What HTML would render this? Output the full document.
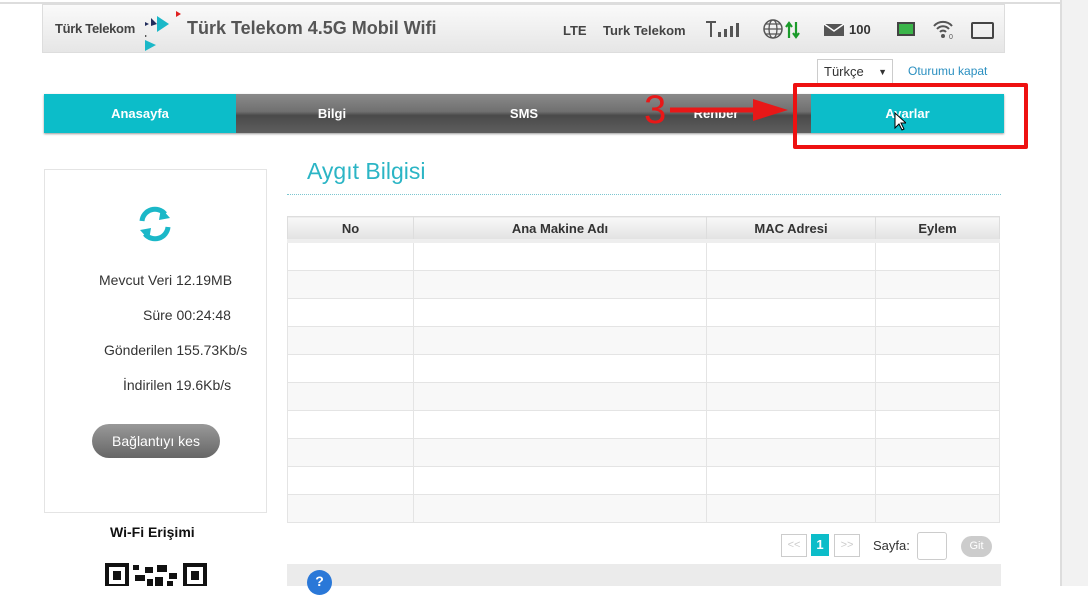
<!DOCTYPE html>
<html><head><meta charset="utf-8"><style>
body{margin:0;width:1088px;height:586px;background:#fff;font-family:"Liberation Sans",sans-serif;position:relative;overflow:hidden;color:#333}
.a{position:absolute}
.hdr{left:42px;top:4px;width:963px;height:49px;background:linear-gradient(#fafafa,#e6e6e6);border:1px solid #ddd;box-sizing:border-box}
.nav{left:44px;top:94px;width:960px;height:39px;background:linear-gradient(#8a8a8a,#707070 45%,#4a4a4a 55%,#5e5e5e);box-shadow:0 1px 2px #999}
.nav div{position:absolute;top:0;height:39px;line-height:39px;text-align:center;color:#fff;font-weight:bold;font-size:13px}
.tbl{left:287px;top:216px;width:713px;border-collapse:collapse}
.tbl th{height:22px;background:linear-gradient(#f8f8f8,#e2e2e2);font-size:13px;color:#333;border:1px solid #ddd;border-bottom:4px solid #eee;padding:0}
.tbl td{height:27px;border:1px solid #e4e4e4;padding:0}
.tbl tr:nth-child(odd) td{background:#f8f8f8}
.st{font-size:14px;color:#333;position:absolute}
</style></head><body>
<div class="a" style="left:0;top:2px;width:1060px;height:2px;background:#ddd"></div>
<div class="a" style="left:1060px;top:0;width:2px;height:586px;background:#ddd"></div>
<div class="a" style="left:1062px;top:0;width:26px;height:586px;background:#f2f2f2"></div>
<div class="a hdr"></div>
<div class="a" style="left:55px;top:21px;font-size:13px;font-weight:bold;color:#444;letter-spacing:-0.3px">Türk Telekom</div>
<svg class="a" style="left:145px;top:8px" width="40" height="44"><polygon points="12,8 24,16 12,24" fill="#1bb8c8"/><polygon points="6,10 12,16 6,18" fill="#222d5c"/><polygon points="31,3 36,6 31,9" fill="#e02020"/><polygon points="0,14 4,16 0,18" fill="#222d5c"/><polygon points="0,32 11,37 0,43" fill="#1bb8c8"/><polygon points="-2,26 2,28 -2,30" fill="#222"/></svg>
<div class="a" style="left:187px;top:18px;font-size:18px;font-weight:bold;color:#555">Türk Telekom 4.5G Mobil Wifi</div>
<div class="a" style="left:563px;top:23px;font-size:13px;font-weight:bold;color:#444">LTE</div>
<div class="a" style="left:603px;top:23px;font-size:13px;font-weight:bold;color:#444">Turk Telekom</div>
<svg class="a" style="left:705px;top:20px" width="42" height="18"><path d="M1 2h10M6 2v15" stroke="#555" stroke-width="2"/><rect x="13" y="12" width="3" height="5" fill="#555"/><rect x="19" y="9" width="3" height="8" fill="#555"/><rect x="25" y="6" width="3" height="11" fill="#555"/><rect x="31" y="3" width="3" height="14" fill="#555"/></svg>
<svg class="a" style="left:763px;top:18px" width="42" height="22"><circle cx="10" cy="11" r="9" fill="none" stroke="#555" stroke-width="1.5"/><ellipse cx="10" cy="11" rx="4" ry="9" fill="none" stroke="#555" stroke-width="1.3"/><path d="M1 11h18M3 6h14M3 16h14" stroke="#555" stroke-width="1.3"/><path d="M26 20V6M23 9l3-4 3 4M33 4v14M30 15l3 4 3-4" stroke="#1a9a2a" stroke-width="2.2" fill="none"/></svg>
<svg class="a" style="left:823px;top:23px" width="22" height="14"><rect x="1" y="1" width="20" height="12" fill="#555"/><path d="M1 1l10 7 10-7" stroke="#fff" stroke-width="1.5" fill="none"/></svg>
<div class="a" style="left:849px;top:22px;font-size:13px;font-weight:bold;color:#333">100</div>
<div class="a" style="left:897px;top:22px;width:18px;height:14px;background:#444;padding:0"><div style="margin:2px;width:14px;height:10px;background:#3bb54a"></div></div>
<svg class="a" style="left:932px;top:18px" width="24" height="22"><path d="M2 8a12 12 0 0 1 18 0M5 11a8 8 0 0 1 12 0M8 14a4 4 0 0 1 6 0" stroke="#555" stroke-width="2" fill="none"/><circle cx="11" cy="18" r="2" fill="#555"/><text x="17" y="21" font-size="7" fill="#555" font-family="Liberation Sans">0</text></svg>
<div class="a" style="left:971px;top:22px;width:19px;height:13px;border:2px solid #444;border-radius:2px"></div>
<div class="a" style="left:817px;top:59px;width:76px;height:26px;border:1px solid #ccc;box-sizing:border-box;font-size:13px;line-height:24px;padding-left:6px;color:#333">Türkçe<span style="position:absolute;right:5px;font-size:9px">▼</span></div>
<div class="a" style="left:908px;top:64px;font-size:12px;color:#2a8fc0">Oturumu kapat</div>
<div class="a nav">
<div style="left:0;width:192px;background:#0cbdc9">Anasayfa</div>
<div style="left:192px;width:192px">Bilgi</div>
<div style="left:384px;width:192px">SMS</div>
<div style="left:576px;width:192px">Rehber</div>
<div style="left:767px;width:193px;background:#0cbdc9">Ayarlar</div>
</div>
<div class="a" style="left:644px;top:88px;font-size:40px;color:#e81818">3</div>
<svg class="a" style="left:668px;top:97px" width="124" height="26"><path d="M2 13h90" stroke="#e81818" stroke-width="5"/><polygon points="85,2 120,13 85,24" fill="#e81818"/></svg>
<div class="a" style="left:793px;top:83px;width:227px;height:58px;border:4px solid #ee1111;border-radius:2px"></div>
<svg class="a" style="left:894px;top:112px" width="12" height="20"><path d="M1 1v15l4-4 3 6 2-1-3-6h5z" fill="#fff" stroke="#000"/></svg>
<div class="a" style="left:44px;top:169px;width:223px;height:344px;border:1px solid #e4e4e4;box-sizing:border-box"></div>
<svg class="a" style="left:135px;top:204px" width="40" height="40"><path d="M7 17a13 13 0 0 1 23-7" stroke="#1bb8c8" stroke-width="5" fill="none"/><polygon points="26,4 35,14 24,16" fill="#1bb8c8"/><path d="M33 23a13 13 0 0 1-23 7" stroke="#1bb8c8" stroke-width="5" fill="none"/><polygon points="14,36 5,26 16,24" fill="#1bb8c8"/></svg>
<div class="st" style="left:99px;top:272px">Mevcut Veri 12.19MB</div>
<div class="st" style="left:143px;top:307px">Süre 00:24:48</div>
<div class="st" style="left:104px;top:342px">Gönderilen 155.73Kb/s</div>
<div class="st" style="left:123px;top:377px">İndirilen 19.6Kb/s</div>
<div class="a" style="left:92px;top:424px;width:128px;height:34px;border-radius:17px;background:linear-gradient(#999,#666);color:#fff;font-size:14px;line-height:34px;text-align:center">Bağlantıyı kes</div>
<div class="a" style="left:110px;top:524px;font-size:14px;font-weight:bold;color:#111">Wi-Fi Erişimi</div>
<svg class="a" style="left:105px;top:563px" width="102" height="23"><rect x="2" y="2" width="20" height="21" fill="none" stroke="#111" stroke-width="4"/><rect x="8" y="8" width="8" height="9" fill="#111"/><rect x="80" y="2" width="20" height="21" fill="none" stroke="#111" stroke-width="4"/><rect x="86" y="8" width="8" height="9" fill="#111"/><path d="M28 2h6v5h-6zM40 4h8v6h-8zM30 12h10v6H30zM52 2h10v7H52zM50 14h8v9h-8zM64 10h8v6h-8zM62 18h6v5h-6zM42 16h6v7h-6z" fill="#111"/></svg>
<div class="a" style="left:307px;top:158px;font-size:23px;color:#2bb5c5">Aygıt Bilgisi</div>
<div class="a" style="left:287px;top:194px;width:714px;border-top:1px dotted #7cc6d0"></div>
<table class="a tbl"><tr><th style="width:125px">No</th><th style="width:292px">Ana Makine Adı</th><th style="width:168px">MAC Adresi</th><th>Eylem</th></tr>
<tr><td></td><td></td><td></td><td></td></tr><tr><td></td><td></td><td></td><td></td></tr><tr><td></td><td></td><td></td><td></td></tr><tr><td></td><td></td><td></td><td></td></tr><tr><td></td><td></td><td></td><td></td></tr><tr><td></td><td></td><td></td><td></td></tr><tr><td></td><td></td><td></td><td></td></tr><tr><td></td><td></td><td></td><td></td></tr><tr><td></td><td></td><td></td><td></td></tr><tr><td></td><td></td><td></td><td></td></tr></table>
<div class="a" style="left:781px;top:534px;width:24px;height:21px;border:1px solid #ccc;color:#ccc;font-size:11px;line-height:21px;text-align:center">&lt;&lt;</div>
<div class="a" style="left:811px;top:534px;width:18px;height:22px;background:#0cbdc9;color:#fff;font-weight:bold;font-size:13px;line-height:22px;text-align:center">1</div>
<div class="a" style="left:834px;top:534px;width:24px;height:21px;border:1px solid #ccc;color:#ccc;font-size:11px;line-height:21px;text-align:center">&gt;&gt;</div>
<div class="a" style="left:873px;top:538px;font-size:13px;color:#333">Sayfa:</div>
<div class="a" style="left:917px;top:532px;width:28px;height:26px;border:1px solid #ccc;border-radius:3px"></div>
<div class="a" style="left:961px;top:536px;width:31px;height:21px;border-radius:11px;background:#ccc;color:#fff;font-size:11px;line-height:21px;text-align:center">Git</div>
<div class="a" style="left:287px;top:564px;width:714px;height:22px;background:#ebebeb"></div>
<div class="a" style="left:307px;top:570px;width:25px;height:25px;border-radius:50%;background:#2a78d8;color:#fff;font-weight:bold;font-size:14px;text-align:center;line-height:22px">?</div>
</body></html>
